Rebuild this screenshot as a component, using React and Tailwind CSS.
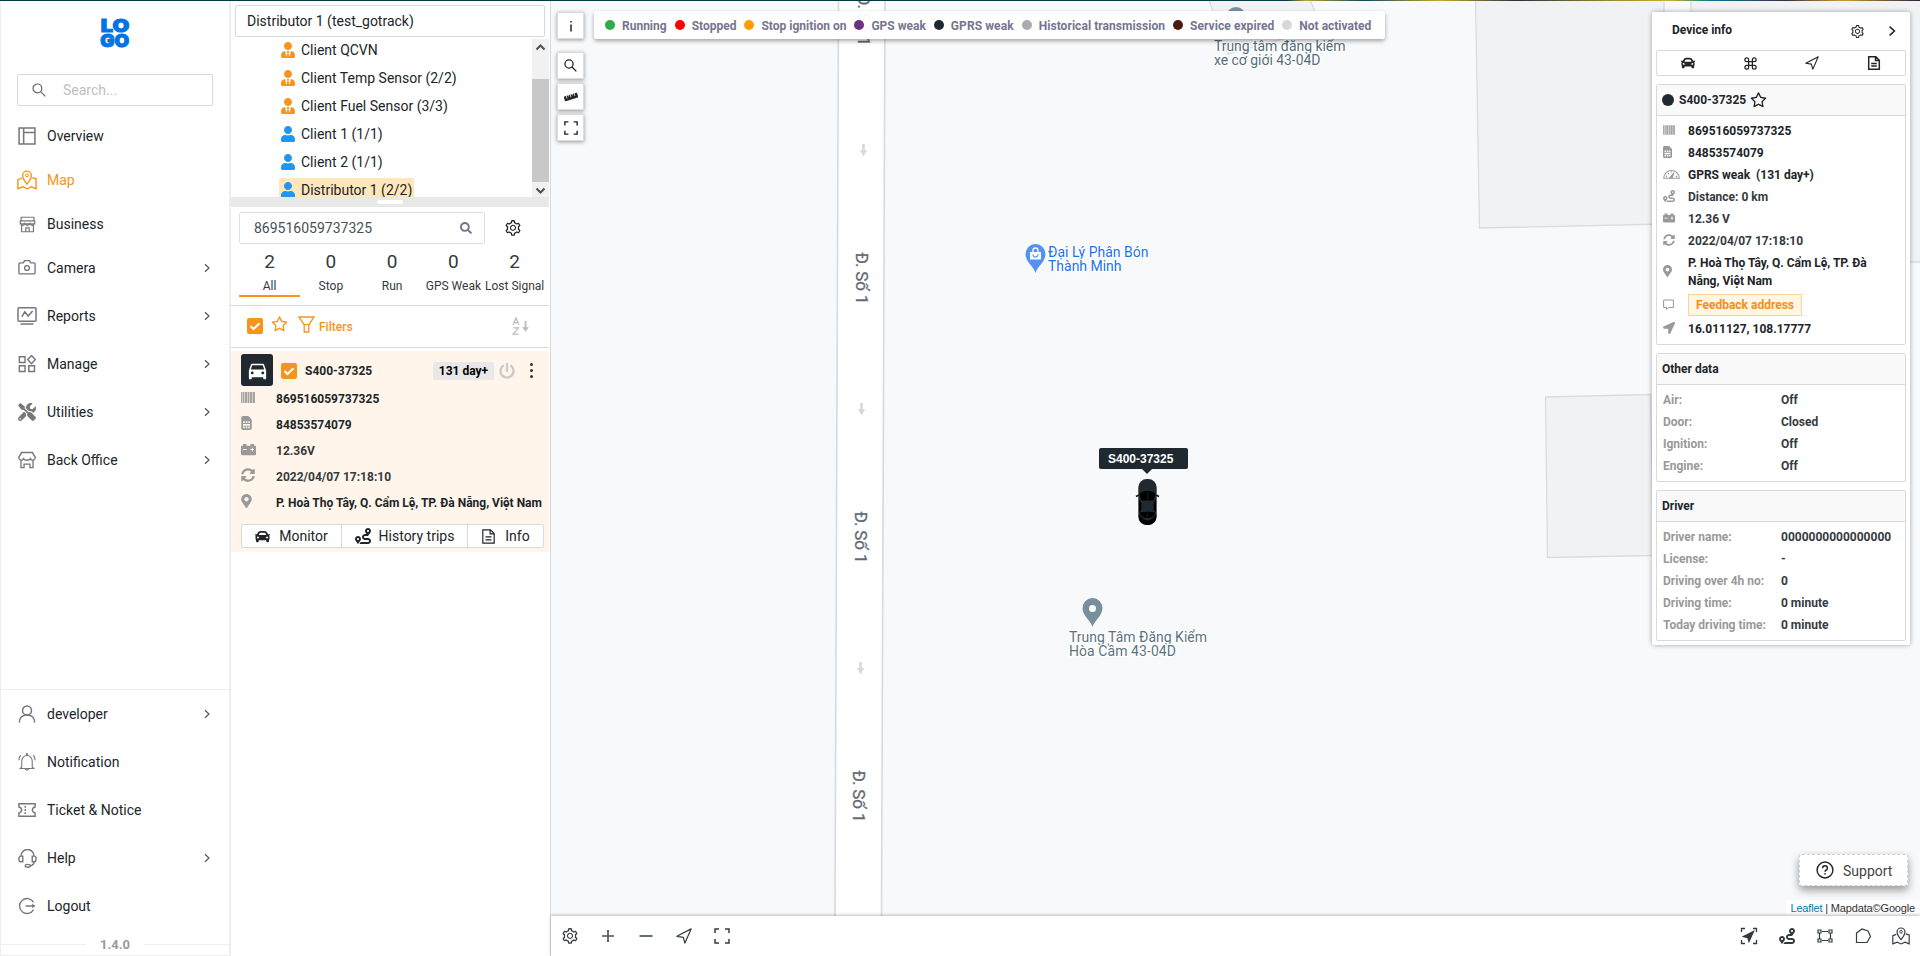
import React from 'react';
import { FaUserTie, FaUser, FaCar, FaSimCard, FaCarBattery, FaSyncAlt, FaMapMarkerAlt, FaLocationArrow, FaPowerOff, FaSearch, FaRuler, FaTools, FaRoute } from 'react-icons/fa';
import { AiOutlineSetting, AiOutlineStar } from 'react-icons/ai';
import { MdDirectionsCar } from 'react-icons/md';
import { FiCommand } from 'react-icons/fi';

const Svg = ({ s = 18, w = 1.4, box = 20, children, className = '' }) => (
  <svg width={s} height={s} viewBox={`0 0 ${box} ${box}`} fill="none" stroke="currentColor" strokeWidth={w} className={`shrink-0 ${className}`}>
    {children}
  </svg>
);

const Magnifier = ({ s = 14, w = 1.5 }) => (
  <Svg s={s} w={w} box={14}><circle cx="5.4" cy="5.4" r="4.4" /><path d="M8.6 8.6l4.7 4.7" /></Svg>
);
const Chevron = ({ s = 10, w = 1.2 }) => (
  <Svg s={s} w={w} box={10}><path d="M3 1.3l4 3.7-4 3.7" /></Svg>
);
const Corners = ({ s = 16, w = 1.8 }) => (
  <Svg s={s} w={w} box={16}><path d="M1 5V1h4M11 1h4v4M15 11v4h-4M5 15H1v-4" /></Svg>
);
const Nav = ({ s = 16, w = 1.2 }) => (
  <Svg s={s} w={w} box={16}><path d="M.9 8.3L15.1.9 8.9 15.1 7.3 9.3z" strokeLinejoin="round" /></Svg>
);
const Doc = ({ s = 14, w = 1.4 }) => (
  <Svg s={s} w={w} box={14}><path d="M1.7.8h7.1l3.5 3.5v8.9H1.7zM8.5.8v3.8h3.8M4.2 7.4h5.6M4.2 10.1h5.6" /></Svg>
);
const SortAZ = () => (
  <Svg s={18} w={1.2} box={18} className="text-[#bbb]">
    <path d="M.9 8L3.900.9 6.900 8M1.900 5.700h4M1.200 10.800h5.200l-5.200 6.300h5.500" />
    <path d="M13.500 4v9" strokeWidth="1.800" /><path d="M10.800 10.500l2.700 3.800 2.700-3.800z" fill="currentColor" strokeWidth=".8" />
  </Svg>
);
const MapIcon = ({ s = 20, w = 1.4 }) => (
  <Svg s={s} w={w}>
    <path d="M10 14.2C7.8 11 5.6 8.500 5.600 5.500a4.400 4.400 0 018.800 0c0 3-2.200 5.500-4.400 8.700z" />
    <circle cx="10" cy="5.300" r="1.500" strokeWidth="1" />
    <path d="M4.800 8.200L.9 9.700v9l5-1.900 4.200 2 4.400-2 4.600 1.900v-10l-3.800-1" />
  </Svg>
);
const Barcode = ({ className }) => (
  <svg width="14" height="11" viewBox="0 0 14 11" fill="currentColor" className={className}>
    <path d="M0 0h1v11H0zM2 0h1v11H2zM4 0h2v11H4zM7 0h1v11H7zM9 0h2v11H9zM12 0h2v11h-2z" opacity=".8" />
    <path d="M0 0h14v11H0z" opacity=".4" />
  </svg>
);
const Gauge = () => (
  <svg width="17" height="10" viewBox="0 0 17 10" fill="none" stroke="currentColor" strokeWidth="1.100">
    <path d="M.7 9.300A7.800 7.800 0 0116.300 9.300z" /><path d="M7 8.500l4-4.700-2 5z" fill="currentColor" /><path d="M3 8l1-1.300M5.200 4.200l.8.9M8.500 2.600v1M14 8l-1-1" />
  </svg>
);

const icons = {
  overview: <Svg w={1.7}><path d="M1.200 1.200h17.600v17.600H1.200zM6.300 1v18M6.300 6.200h12.500" /></Svg>,
  map: <MapIcon />,
  business: <Svg s={17}><path d="M2.500 1.500h15v4.300h-15zM1.500 5.800h17v3.400h-17zM3 9.200v9.300h14V9.200M2 9c.8 2.600 4.200 2.600 5 0 1 2.600 5 2.600 6 0 .8 2.600 4.200 2.600 5 0M8 18.500V14h4v4.500" /></Svg>,
  camera: <Svg w={1.500}><path d="M2.300 4.300h3.600l1.400-2.500h5.400l1.400 2.500h3.600q1.300 0 1.300 1.300v9.600q0 1.300-1.300 1.300H2.300Q1 16.500 1 15.200V5.600q0-1.300 1.300-1.300z" /><circle cx="10" cy="10" r="2.700" /></Svg>,
  reports: <Svg s={20} w={1.500}><path d="M2 1.700h16q1 0 1 1v11.500q0 1-1 1H2q-1 0-1-1V2.700q0-1 1-1zM3.500 18h13M4.800 10.800l3-5 3.400 4.200 4.400-5" /></Svg>,
  manage: <Svg w={1.600}><path d="M1.500 2h6.300v6.300H1.500zM1.500 12h6.300v6.300H1.500zM12 12h6.300v6.300H12zM15 .6l4.200 4.500L15 9.600l-4.200-4.500z" /></Svg>,
  utilities: <FaTools size={18} />,
  office: <Svg w={1.500}><path d="M4 1.700h12l3 5v1.500c-1 2.700-4 2.700-5 .3-1.500 2.400-6.500 2.400-8 0-1 2.400-4 2.400-5-.3V6.700zM3.300 10.500v8h3.400v-4h6.600v4h3.400v-8" /></Svg>,
  user: <Svg w={1.700}><circle cx="10" cy="6" r="5" /><path d="M1.500 19.500c0-5 3-8.500 8.500-8.500s8.500 3.500 8.500 8.500" /></Svg>,
  bell: <Svg w={1.200}><path d="M4.200 15.500V9a5.800 6.200 0 0111.600 0v6.500l1.700 1.700h-15zM8 18q2 2 4 0M9.500 2.500V1h1v1.500M1 8q0-3.500 2-5.500M19 8q0-3.500-2-5.500" /></Svg>,
  ticket: <Svg w={1.600}><path d="M1 3h18v3.700q-3 .8-3 3.300t3 3.300V17H1v-3.700q3-.8 3-3.300T1 6.700z" /><path d="M8 5.500v9" strokeDasharray="2 1.500" /></Svg>,
  help: <Svg s={19} w={1.500}><path d="M3 7.500a7 7 0 0114 0M3 7.500h2v6H3q-2 0-2-3t2-3zM17 7.500h-2v6h2q2 0 2-3t-2-3zM17 13.500q0 3.700-4.500 4.200" /><ellipse cx="10.300" cy="17.700" rx="2.700" ry="1.500" /></Svg>,
  logout: <Svg w={1.500}><path d="M17.300 6A8.300 8.300 0 1017.300 14M8.500 10h9" /><path d="M16 8l3 2-3 2z" fill="currentColor" strokeWidth=".6" /></Svg>,
};

const NavItem = ({ icon, label, arrow, active }) => (
  <div className={`flex h-10 items-center pl-4 pr-[17px] text-sm ${active ? 'text-[#f7941d]' : 'text-[#212529]'}`}>
    <span className={`flex w-5 justify-center ${active ? '' : 'text-[#777]'}`}>{icons[icon]}</span>
    <span className="ml-[10px] flex-1">{label}</span>
    {arrow && <span className="text-[#555]"><Chevron /></span>}
  </div>
);

const Check = () => (
  <span className="flex h-4 w-4 shrink-0 items-center justify-center rounded-[2px] bg-[#f7941d] text-white">
    <Svg s={12} w={2} box={12}><path d="M1.500 6l3 3 6-5.800" /></Svg>
  </span>
);

const tree = [
  ['Client QCVN', true],
  ['Client Temp Sensor (2/2)', true],
  ['Client Fuel Sensor (3/3)', true],
  ['Client 1 (1/1)', false],
  ['Client 2 (1/1)', false],
  ['Distributor 1 (2/2)', false],
];
const tabs = [[2, 'All'], [0, 'Stop'], [0, 'Run'], [0, 'GPS Weak'], [2, 'Lost Signal']];
const legend = [
  ['bg-[#2eac4a]', 'Running', ''], ['bg-[#ff0000]', 'Stopped', ''], ['bg-[#ffa000]', 'Stop ignition on', ''], ['bg-[#6b3082]', 'GPS weak', ''],
  ['bg-[#20292f]', 'GPRS weak', 'tracking-[0.08px]'], ['bg-[#acacac]', 'Historical transmission', 'tracking-[0.06px]'], ['bg-[#4a1c10]', 'Service expired', 'tracking-[0.06px]'], ['bg-[#d8d8d8]', 'Not activated', ''],
];

const CardRow = ({ icon, children, tone = 'text-[#212529]' }) => (
  <div className="flex h-[26px] items-center">
    <span className="relative -top-[2px] w-[35px] text-[#999]">{icon}</span>
    <span className={`whitespace-nowrap text-xs font-bold ${tone}`}>{children}</span>
  </div>
);

const InfoRow = ({ icon, children, tone = 'text-[#212529]', h = 'h-[22px]' }) => (
  <div className={`flex ${h} items-center`}>
    <span className="relative -top-[1px] w-[25px] shrink-0 text-[#999]">{icon}</span>
    <span className={`text-xs font-bold ${tone}`}>{children}</span>
  </div>
);

const Section = ({ title, rows, className = '' }) => (
  <section className={`rounded-[2px] border border-[#d9d9d9] bg-white ${className}`}>
    <h3 className="flex h-[31px] items-center border-b border-[#d9d9d9] bg-[#f9f9f9] pl-[5px] text-xs font-bold text-[#212529]">{title}</h3>
    <div className="pb-[5px] pl-[6px] pt-[4px]">
      {rows.map(([k, v]) => (
        <div key={k} className="flex h-[22px] items-center text-xs font-bold">
          <span className="w-[118px] text-[#999]">{k}</span>
          <span className="text-[#343a40]">{v}</span>
        </div>
      ))}
    </div>
  </section>
);

const Sidebar = () => (
  <aside className="flex w-[231px] shrink-0 flex-col border-l border-r-2 border-[#eee] bg-white">
    <div className="flex h-[73px] justify-center pt-[16px]">
      <svg width="32" height="32" viewBox="0 0 32 32" stroke="#0073e6" strokeWidth="1" className="overflow-visible fill-[#0073e6] font-[Inter,sans-serif] text-[18px] font-black">
        <text x="1.800" y="15" textLength="28.500" lengthAdjust="spacingAndGlyphs">LO</text>
        <text x="1.200" y="29.800" textLength="29" lengthAdjust="spacingAndGlyphs">GO</text>
      </svg>
    </div>
    <div className="mx-4 mb-[10px] flex h-8 items-center rounded-[2px] border border-[#d9d9d9] pl-[14px] text-sm text-[#bfbfbf]">
      <span className="w-[31px] text-[#666]"><Magnifier w={1.200} /></span>Search...
    </div>
    <nav className="flex flex-col">
      <div className="flex flex-col gap-1">
        <NavItem icon="overview" label="Overview" />
        <NavItem icon="map" label="Map" active />
        <NavItem icon="business" label="Business" />
      </div>
      <div className="mt-1 flex flex-col gap-2">
        <NavItem icon="camera" label="Camera" arrow />
        <NavItem icon="reports" label="Reports" arrow />
        <NavItem icon="manage" label="Manage" arrow />
        <NavItem icon="utilities" label="Utilities" arrow />
        <NavItem icon="office" label="Back Office" arrow />
      </div>
    </nav>
    <div className="mt-auto flex flex-col gap-2 border-t border-[#eee] pt-1">
      <NavItem icon="user" label="developer" arrow />
      <NavItem icon="bell" label="Notification" />
      <NavItem icon="ticket" label="Ticket & Notice" />
      <NavItem icon="help" label="Help" arrow />
      <NavItem icon="logout" label="Logout" />
    </div>
    <div className="flex h-[30px] items-center gap-[14px] border-b border-[#eee] pt-[8px] text-[13px] font-bold text-[#999]">
      <span className="h-px flex-1 bg-[#eee]" />1.4.0<span className="h-px flex-1 bg-[#eee]" />
    </div>
  </aside>
);

const DevicePanel = () => (
  <section className="flex w-[320px] shrink-0 flex-col border-r border-[#d9d9d9] bg-white pr-px text-[#212529]">
    <div className="ml-1 mr-1 mt-1 flex h-8 w-[310px] shrink-0 items-center rounded-[2px] border border-[#d9d9d9] pl-[11px] text-sm">Distributor 1 (test_gotrack)</div>
    <div className="mt-[2px] flex h-[158px] overflow-hidden">
      <div className="-mt-[3px] w-[301px] shrink-0 pl-[48px]">
        {tree.map(([name, tie], i) => (
          <div key={name} className="flex h-[28px] items-center">
            <span className={`flex h-6 items-center gap-[6px] rounded-[2px] px-[2px] text-sm ${i === 5 ? 'bg-[#ffe7ba]' : ''}`}>
              {tie ? <FaUserTie size={16} className="w-[14px] text-[#f7941d]" /> : <FaUser size={16} className="w-[14px] text-[#2196ec]" />}
              {name}
            </span>
          </div>
        ))}
      </div>
      <div className="flex w-[17px] flex-col items-center justify-between bg-[#f1f1f1] text-[#505050]">
        <Svg s={17} w={2} box={17}><path d="M4.500 10.500l4-4 4 4" /></Svg>
        <div className="mb-[-2px] mt-auto h-[103px] w-[17px] bg-[#c8c8c8]" />
        <Svg s={17} w={2} box={17}><path d="M4.500 8.500l4 4 4-4" /></Svg>
      </div>
    </div>
    <div className="flex h-[10px] items-center justify-center bg-[#e8e8e8]"><span className="h-1 w-[26px] rounded-full bg-white" /></div>
    <div className="mt-[5px] flex h-8 items-center pl-2">
      <div className="flex h-8 w-[246px] items-center rounded-[2px] border border-[#dcdfe8] pl-[14px] pr-[12px] text-sm text-[#495057]">
        <span className="flex-1">869516059737325</span><FaSearch size={12} className="text-[#75758f]" />
      </div>
      <AiOutlineSetting size={18} className="ml-[19px]" />
    </div>
    <div className="flex h-[62px] border-b border-[#d9d9d9] pl-2 text-[#343a40]">
      {tabs.map(([n, l], i) => (
        <div key={l} className={`flex h-[53px] w-[61.250px] shrink-0 flex-col items-center ${i === 0 ? 'border-b-2 border-[#f7941d]' : ''}`}>
          <span className="mt-[6px] text-[19px] leading-6">{n}</span>
          <span className="mt-[3px] whitespace-nowrap text-xs leading-[18px]">{l}</span>
        </div>
      ))}
    </div>
    <div className="flex h-[42px] items-center border-b border-[#d9d9d9] pb-[2px] pl-4 pr-[19px] text-[#f7941d]">
      <Check />
      <AiOutlineStar size={19} className="-mt-[3px] ml-[7px]" />
      <Svg s={17} w={1.300} box={17} className="-mt-[2px] ml-[9px]"><path d="M1 1h15l-5.200 7.800V16H6.200V8.800zM5.800 8.600h5.400" /></Svg>
      <span className="ml-[4px] mt-[2px] flex-1 text-xs font-medium">Filters</span>
      <SortAZ />
    </div>
    <div className="mt-[3px] h-[201px] bg-[#fff5ea] pl-[10px] pr-[5px] pt-[3px]">
      <div className="flex h-8 items-center">
        <span className="flex h-8 w-8 items-center justify-center rounded-[3px] bg-[#20292f] text-white"><MdDirectionsCar size={23} /></span>
        <span className="ml-2 mt-[2px]"><Check /></span>
        <span className="ml-2 mt-[2px] flex-1 text-xs font-bold">S400-37325</span>
        <span className="mt-[2px] flex h-[18px] w-[61px] items-center justify-center rounded-[2px] bg-[#e8e8e8] text-xs font-bold text-black">131 day+</span>
        <FaPowerOff size={16} className="ml-[5px] mt-px text-[#ccc]" />
        <span className="ml-[15px] mr-[11px] flex flex-col gap-[3px]">
          <i className="h-[3px] w-[3px] rounded-full bg-[#333]" /><i className="h-[3px] w-[3px] rounded-full bg-[#333]" /><i className="h-[3px] w-[3px] rounded-full bg-[#333]" />
        </span>
      </div>
      <div>
        <CardRow icon={<Barcode />}>869516059737325</CardRow>
        <CardRow icon={<FaSimCard size={14} className="w-[11px]" />}>84853574079</CardRow>
        <CardRow icon={<FaCarBattery size={15} />} tone="text-[#343a40]">12.36V</CardRow>
        <CardRow icon={<FaSyncAlt size={14} />} tone="text-[#343a40]">2022/04/07 17:18:10</CardRow>
        <CardRow icon={<FaMapMarkerAlt size={14} className="w-[11px]" />}>P. Hoà Thọ Tây, Q. Cẩm Lệ, TP. Đà Nẵng, Việt Nam</CardRow>
      </div>
      <div className="mt-2 flex h-6 rounded-[2px] border border-[#d9d9d9] bg-white text-sm">
        <span className="flex w-[100px] items-center justify-center gap-[9px] border-r border-[#d9d9d9]"><FaCar size={15} />Monitor</span>
        <span className="flex w-[126px] items-center justify-center gap-[8px] border-r border-[#d9d9d9]"><FaRoute size={16} />History trips</span>
        <span className="flex flex-1 items-center justify-center gap-[9px]"><Doc s={15} w={1.100} />Info</span>
      </div>
    </div>
  </section>
);

const Pin = ({ x, y, color }) => (
  <g transform={`translate(${x} ${y})`}>
    <path d="M0 19C-2 12-10 8-10 0a10 10 0 0120 0C10 8 2 12 0 19z" fill={color} />
  </g>
);

const MapScene = () => (
  <svg width="1369" height="915" viewBox="551 1 1369 915" className="block">
    <rect x="550" y="1" width="1370" height="915" fill="#f8f9fb" />
    <g fill="#f1f2f4" stroke="#dadce0" strokeWidth="1.300">
      <path d="M1209 0l19 54 94-26-12-28z" />
      <path d="M1475.500 0l4 228L1664 224V0zM1691 0v262h240V0z" />
      <path d="M1545.500 397l105-2.500 3 161-106 2z" />
    </g>
    <path d="M838.500 0L835 917h46.500L885 0z" fill="#fff" stroke="#d8dbe0" strokeWidth="1.700" />
    <g fill="#d6d9de">
      {[[863.500, 150], [861.600, 409], [860.600, 668]].map(([x, y]) => (
        <path key={y} d={`M${x - 1.300} ${y - 6}h2.600v6h2.300L${x} ${y + 6.500}l-3.600-6.500h2.300z`} />
      ))}
    </g>
    <g fill="#5f6b76" stroke="#5f6b76" strokeWidth=".3" className="font-[Roboto,sans-serif] text-[17px]">
      {[[858, -6], [856, 252.500], [854.500, 511.500], [853.300, 770.500]].map(([x, y]) => (
        <text key={y} transform={`translate(${x} ${y}) rotate(90)`} textLength="52">Đ. Số 1</text>
      ))}
    </g>
    <Pin x={1236} y={17} color="#78909c" /><circle cx="1236" cy="17" r="3.500" fill="#fff" />
    <Pin x={1092.500} y={608} color="#78909c" /><circle cx="1092.500" cy="608.500" r="3.500" fill="#fff" />
    <Pin x={1035.500} y={254} color="#5491f5" />
    <path d="M1030 252h11v7.500h-11z" fill="#fff" /><path d="M1033 252v-1.500a2.500 2.500 0 015 0v1.500" fill="none" stroke="#fff" strokeWidth="1.300" />
    <path d="M1033 254.500a2.500 2.500 0 005 0" fill="none" stroke="#5491f5" strokeWidth="1.200" />
    <g strokeLinejoin="round" stroke="#fff" strokeWidth="2.500" className="font-[Roboto,sans-serif] text-[14px] [paint-order:stroke]">
      <g fill="#546e7a"><text x="1214" y="51" textLength="131.500">Trung tâm đăng kiểm</text><text x="1214" y="65" textLength="106.500">xe cơ giới 43-04D</text></g>
      <g fill="#1a73e8"><text x="1048" y="257" textLength="100.500">Đại Lý Phân Bón</text><text x="1048" y="271" textLength="73.500">Thành Minh</text></g>
      <g fill="#5b737e"><text x="1069" y="642" textLength="138">Trung Tâm Đăng Kiểm</text><text x="1069" y="656" textLength="107">Hòa Cầm 43-04D</text></g>
    </g>
    <g>
      <path d="M1136 496.500l3-1.500M1159 496.500l-3-1.500" stroke="#111" strokeWidth="1.500" />
      <rect x="1138.300" y="479" width="18.400" height="46" rx="8.500" fill="#20292f" />
      <path d="M1138.800 514v3q1 8 8.700 8t8.700-8v-3q-4 6.500-8.700 6.500t-8.700-6.500z" fill="#000" />
      <path d="M1139.500 494q2-3 8-3t8 3l-2 6.500h-12zM1139.500 512.500q8-1.500 16 0-2 5.500-8 5.500t-8-5.500zM1139 499l2.300 4v7l-2.300 2zM1156 499l-2.300 4v7l2.300 2z" fill="#000" />
      <path d="M1147.500 492v8M1147.500 512.500v5" stroke="#20292f" strokeWidth=".6" />
    </g>
  </svg>
);

const MapButton = ({ children, className = '' }) => (
  <div className={`flex h-[27px] w-[27px] items-center justify-center border border-[#ddd] bg-white shadow-[0_1px_4px_rgba(0,0,0,0.4)] ${className}`}>{children}</div>
);

const InfoPanel = () => (
  <div className="absolute left-[1101px] top-[11px] h-[633px] w-[258px] rounded-[3px] bg-white/[0.98] px-1 shadow-[0_0_5px_rgba(0,0,0,0.35)]">
    <div className="flex h-[38px] items-center pl-4 pr-[8px] text-[#212529]">
      <span className="-mt-[3px] flex-1 text-xs font-bold">Device info</span>
      <AiOutlineSetting size={15} /><span className="ml-[21px]"><Chevron s={12} w={1.300} /></span>
    </div>
    <div className="flex h-[26px] items-center justify-around rounded-[2px] border border-[#d9d9d9] bg-white text-[#212529]">
      <FaCar size={14} /><FiCommand size={15} /><Nav s={14} w={1.200} /><Doc w={1.500} />
    </div>
    <section className="mt-2 h-[261px] rounded-[2px] border border-[#d9d9d9] bg-white">
      <h3 className="flex h-[31px] items-center border-b border-[#d9d9d9] bg-[#f9f9f9] pl-[5px] text-xs font-bold text-[#212529]">
        <span className="mr-[5px] h-3 w-3 rounded-full bg-[#20292f]" />S400-37325<AiOutlineStar size={19} className="ml-[3px]" />
      </h3>
      <div className="pl-[6px] pt-[4px]">
        <InfoRow icon={<Barcode className="h-[10px] w-3" />}>869516059737325</InfoRow>
        <InfoRow icon={<FaSimCard size={12} className="w-[9px]" />}>84853574079</InfoRow>
        <InfoRow icon={<Gauge />}><span className="whitespace-pre">GPRS weak  (131 day+)</span></InfoRow>
        <InfoRow icon={<FaRoute size={12} />} tone="text-[#343a40]">Distance: 0 km</InfoRow>
        <InfoRow icon={<FaCarBattery size={12} />} tone="text-[#343a40]">12.36 V</InfoRow>
        <InfoRow icon={<FaSyncAlt size={12} />} tone="text-[#343a40]">2022/04/07 17:18:10</InfoRow>
        <InfoRow h="h-[40px]" icon={<FaMapMarkerAlt size={12} className="w-[9px]" />}><span className="block w-[190px] leading-[18px]">P. Hoà Thọ Tây, Q. Cẩm Lệ, TP. Đà Nẵng, Việt Nam</span></InfoRow>
        <InfoRow h="h-[26px]" icon={<Svg s={11} w={1} box={11}><path d="M.6 1h9.800v7.500H5.500L3.500 10.500v-2H.6z" /></Svg>}>
          <span className="flex h-[22px] w-[114px] items-center justify-center border border-[#ffd591] bg-[#fff7e6] text-[#fa8c16]">Feedback address</span>
        </InfoRow>
        <InfoRow icon={<FaLocationArrow size={12} />}>16.011127, 108.17777</InfoRow>
      </div>
    </section>
    <Section className="mt-2 h-[129px]" title="Other data" rows={[['Air:', 'Off'], ['Door:', 'Closed'], ['Ignition:', 'Off'], ['Engine:', 'Off']]} />
    <Section className="mt-2 h-[151px]" title="Driver" rows={[['Driver name:', '0000000000000000'], ['License:', '-'], ['Driving over 4h no:', '0'], ['Driving time:', '0 minute'], ['Today driving time:', '0 minute']]} />
  </div>
);

const BottomBar = () => (
  <footer className="relative flex h-10 shrink-0 items-center justify-between bg-white pl-[10px] pr-[10px] text-[#343a40] shadow-[0_-1px_3px_rgba(0,0,0,0.25)]">
    <div className="flex gap-[20px]">
      <AiOutlineSetting size={18} />
      <Svg w={1.700} box={18} className="text-[#4b545b]"><path d="M3 9h12M9 3v12" /></Svg>
      <Svg w={1.700} box={18} className="text-[#4b545b]"><path d="M2.500 9h13" /></Svg>
      <span className="flex w-[18px] items-center justify-center"><Nav /></span>
      <span className="flex w-[18px] items-center justify-center"><Corners w={1.500} /></span>
    </div>
    <div className="flex gap-[20px]">
      <Svg w={1.300} box={18}><path d="M1.500 5V1.500H5M13 1.500h3.500V5M16.500 13v3.500H13M5 16.500H1.500V13" /><path d="M3.500 9.500l10-5-4.500 10-1.200-4z" fill="currentColor" /></Svg>
      <span className="flex w-[18px] items-center justify-center"><FaRoute size={16} /></span>
      <Svg w={1.200} box={18}><path d="M3.500 6v6M6 4.500h6M14.500 6v6M6 13.500h6M2 3h3v3H2zM13 3h3v3h-3zM2 12h3v3H2zM13 12h3v3h-3z" /></Svg>
      <Svg w={1.200} box={18}><path d="M2.500 15.500V6l5.500-4 6 2 2.500 5.500-3.500 6z" /></Svg>
      <MapIcon s={18} w={1.300} />
    </div>
  </footer>
);

export default function App() {
  return (
    <div className="flex h-[956px] w-[1920px] flex-col overflow-hidden bg-white font-[Roboto,sans-serif] antialiased">
      <div className="h-px shrink-0 bg-[linear-gradient(90deg,#033844_0_67%,#b9a436_68%,#0a4a5c_71%,#c5a92c_75%,#23343c_79%,#9b8a2f_84%,#c9b02f_87%,#08788c_89%,#3a2b4a_93%,#c7a02a_96%,#2c2148_100%)]" />
      <div className="flex min-h-0 flex-1">
        <Sidebar />
        <DevicePanel />
        <main className="flex flex-1 flex-col">
          <div className="relative h-[915px] shrink-0 overflow-hidden">
            <MapScene />
            <div className="absolute left-[548px] top-[447px] flex h-[21px] w-[89px] items-center rounded-[2px] bg-[#20292f] pl-[9px] font-['Liberation_Sans',sans-serif] text-xs font-bold text-white">
              S400-37325
              <i className="absolute left-[43px] top-[21px] border-x-[5px] border-t-[5px] border-x-transparent border-t-[#20292f]" />
            </div>
            <div className="absolute left-[6px] top-[11px] flex flex-col gap-1 text-[#212529]">
              <MapButton className="mb-[9px]"><Svg s={12} w={1.500} box={12}><path d="M6 1v1.500M6 4.500V11.500" /></Svg></MapButton>
              <MapButton><Magnifier s={13} w={1.400} /></MapButton>
              <MapButton><FaRuler size={14} className="rotate-[12deg]" /></MapButton>
              <MapButton><Corners s={14} w={1.600} /></MapButton>
            </div>
            <div className="absolute left-[43px] top-[10px] flex h-7 w-[791px] items-center gap-2 rounded-[3px] bg-white/95 pl-[11px] text-xs font-bold text-[#75758f] shadow-[0_2px_4px_rgba(0,0,0,0.35)]">
              {legend.map(([c, t, spacing]) => (
                <span key={t} className={`flex items-center gap-[7px] whitespace-nowrap ${spacing}`}><i className={`h-[10px] w-[10px] rounded-full ${c}`} /><span className="mt-px">{t}</span></span>
              ))}
            </div>
            <InfoPanel />
            <div className="absolute left-[1248px] top-[853px] flex h-8 w-[109px] items-center gap-[9px] rounded-[3px] border border-dashed border-[#d0d0d0] bg-white pl-4 text-sm text-[#444] shadow-[0_4px_8px_rgba(0,0,0,0.4)]">
              <Svg s={18} w={1.600} className="text-[#212529]"><circle cx="10" cy="10" r="8.800" /><path d="M7.300 8q0-2.700 2.700-2.700T12.700 8q0 1.300-1.300 2T10 12M10 13.300v1.700" /></Svg>
              <span className="mt-px">Support</span>
            </div>
            <div className="absolute bottom-0 right-0 flex h-4 w-[134px] items-center justify-end whitespace-pre bg-white/70 pr-[5px] font-['Liberation_Sans',sans-serif] text-[11px] tracking-[-0.16px] text-[#333]">
              <span className="text-[#0078a8]">Leaflet</span> | Mapdata©Google
            </div>
          </div>
          <BottomBar />
        </main>
      </div>
    </div>
  );
}
